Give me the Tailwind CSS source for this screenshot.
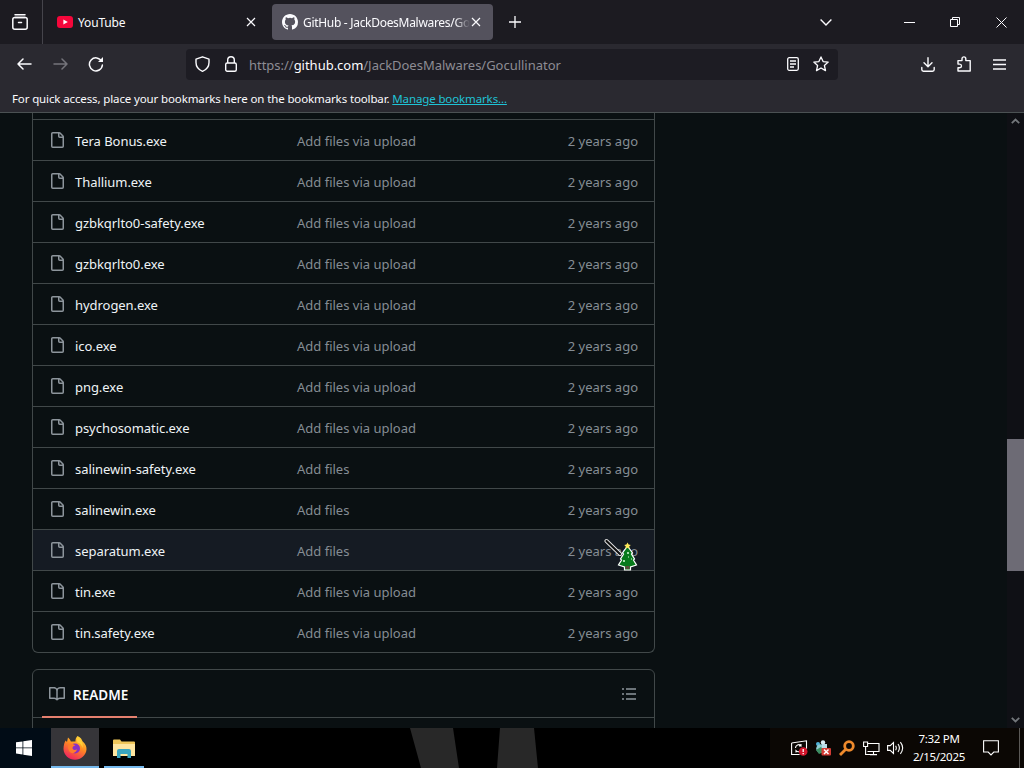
<!DOCTYPE html>
<html lang="en">

<head>
    <meta charset="UTF-8">
    <meta name="viewport" content="width=device-width, initial-scale=1.0">
    <title>GitHub - JackDoesMalwares/Gocullinator</title>
    <script src="https://cdn.jsdelivr.net/npm/@tailwindcss/browser@4"></script>
</head>

<body class="bg-black">
    <div class="relative flex flex-col w-[1024px] h-[768px] overflow-hidden font-['Noto_Sans',sans-serif] text-[#fbfbfe]">

        <!-- tab strip -->
        <header class="flex items-center h-11 shrink-0 bg-[#1c1b21]">
            <div class="flex items-center h-full w-[43px] pl-3 border-r border-[#45444b]">
                <svg class="size-4" viewBox="0 0 16 16" fill="none" stroke="currentColor" stroke-width="1.5" stroke-linecap="round">
                    <path d="M3 .8h10" />
                    <rect x=".8" y="3.6" width="14.4" height="11.6" rx="2" />
                    <path d="M3 3.4h10M6.5 8.6h3" />
                </svg>
            </div>
            <div class="flex items-center w-[229px] h-9 pl-[14px] pr-[16px]">
                <svg class="w-4 h-3 mr-[5px]" viewBox="0 0 16 12">
                    <rect width="16" height="12" rx="3" fill="#f5073b" />
                    <path d="M6.4 3.4v5.2L10.8 6z" fill="#fff" />
                </svg>
                <span class="text-xs flex-1 pt-[2px] tracking-[-0.15px]">YouTube</span>
                <svg class="size-[10px]" viewBox="0 0 10 10" stroke="currentColor" stroke-width="1.2"><path d="M1 1l8 8M9 1l-8 8" /></svg>
            </div>
            <div class="flex items-center w-[221px] h-9 pl-[10px] pr-3 rounded bg-[#54525d]">
                <svg class="size-4 mr-[5px] shrink-0" viewBox="0 0 16 16" fill="currentColor">
                    <path d="M8 0C3.58 0 0 3.58 0 8c0 3.54 2.29 6.53 5.47 7.59.4.07.55-.17.55-.38 0-.19-.01-.82-.01-1.49-2.01.37-2.53-.49-2.69-.94-.09-.23-.48-.94-.82-1.13-.28-.15-.68-.52-.01-.53.63-.01 1.08.58 1.23.82.72 1.21 1.87.87 2.33.66.07-.52.28-.87.51-1.07-1.78-.2-3.64-.89-3.64-3.95 0-.87.31-1.59.82-2.15-.08-.2-.36-1.02.08-2.12 0 0 .67-.21 2.2.82a7.6 7.6 0 0 1 4 0c1.53-1.04 2.2-.82 2.2-.82.44 1.1.16 1.92.08 2.12.51.56.82 1.27.82 2.15 0 3.07-1.87 3.75-3.65 3.95.29.25.54.73.54 1.48 0 1.07-.01 1.93-.01 2.2 0 .21.15.46.55.38A8.01 8.01 0 0 0 16 8c0-4.42-3.58-8-8-8z" />
                </svg>
                <span class="text-xs w-[167px] mr-[1px] pt-[2px] tracking-[-0.3px] overflow-hidden whitespace-nowrap [mask-image:linear-gradient(to_right,#000_152px,transparent)]">GitHub - JackDoesMalwares/Go</span>
                <svg class="size-[10px] shrink-0" viewBox="0 0 10 10" stroke="currentColor" stroke-width="1.2"><path d="M1 1l8 8M9 1l-8 8" /></svg>
            </div>
            <svg class="size-3 ml-4" viewBox="0 0 12 12" stroke="currentColor" stroke-width="1.3"><path d="M6 0v12M0 6h12" /></svg>
            <svg class="w-3 h-[7px] ml-[299px]" viewBox="0 0 12 7" fill="none" stroke="currentColor" stroke-width="1.4"><path d="M.6.6L6 6 11.4.6" /></svg>
            <svg class="w-[11px] h-px ml-[72px]" viewBox="0 0 11 1"><path d="M0 0h11v1H0z" fill="currentColor" /></svg>
            <svg class="size-[10px] ml-[35px]" viewBox="0 0 10 10" fill="none" stroke="currentColor"><path d="M.5 2.5h7v7h-7zM2.5 2.5v-2h7v7h-2" /></svg>
            <svg class="size-[11px] ml-[36px]" viewBox="0 0 11 11" stroke="currentColor"><path d="M.5.5l10 10M10.5.5l-10 10" /></svg>
        </header>

        <!-- navigation -->
        <nav class="flex items-center h-10 shrink-0 bg-[#2a2930]">
            <svg class="w-[15px] h-3 ml-[17px]" viewBox="0 0 15 12" fill="none" stroke="currentColor" stroke-width="1.5" stroke-linecap="round" stroke-linejoin="round"><path d="M14 6H1M6 1L1 6l5 5" /></svg>
            <svg class="w-[15px] h-3 ml-[21px] text-[#75747b]" viewBox="0 0 15 12" fill="none" stroke="currentColor" stroke-width="1.5" stroke-linecap="round" stroke-linejoin="round"><path d="M1 6h13M9 1l5 5-5 5" /></svg>
            <svg class="size-4 ml-5" viewBox="0 0 16 16" fill="none" stroke="currentColor" stroke-width="1.5" stroke-linecap="round">
                <path d="M13.6 5.2A6.5 6.5 0 1 0 14.4 9" />
                <path d="M15 1v5h-5z" fill="currentColor" stroke="none" />
            </svg>
            <div class="flex items-center w-[652px] h-[31px] ml-[82px] pl-[9px] pr-[9px] rounded bg-[#1d1c23]">
                <svg class="w-[15px] h-4" viewBox="0 0 15 16" fill="none" stroke="currentColor" stroke-width="1.4" stroke-linejoin="round"><path d="M7.5.8L14 3.1v3.4c0 4-2.6 7.2-6.5 8.8C3.6 13.7 1 10.5 1 6.5V3.1z" /></svg>
                <svg class="w-3 h-4 ml-[15px]" viewBox="0 0 12 16" fill="none" stroke="currentColor" stroke-width="1.4"><rect x=".7" y="7" width="10.6" height="8.2" rx="1.5" /><path d="M2.7 7V4a3.3 3.3 0 0 1 6.6 0v3" /></svg>
                <span class="ml-3 flex-1 pt-[3px] text-[13px] tracking-[-0.02px] text-[#8d8c94]">https://<span class="text-[#fbfbfe]">github.com</span>/JackDoesMalwares/Gocullinator</span>
                <svg class="w-3 h-[14px]" viewBox="0 0 12 14" fill="none" stroke="currentColor" stroke-width="1.3"><rect x=".7" y=".7" width="10.6" height="12.6" rx="1.5" /><path d="M3 4h6M3 7h6M3 10h4" /></svg>
                <svg class="size-4 ml-[14px]" viewBox="0 0 16 16" fill="none" stroke="currentColor" stroke-width="1.3" stroke-linejoin="round"><path d="M8 .9l2.1 4.7 5.1.5-3.8 3.4 1.1 5.1L8 12l-4.5 2.6 1.1-5.1L.8 6.1l5.1-.5z" /></svg>
            </div>
            <svg class="w-[14px] h-[15px] ml-[83px]" viewBox="0 0 14 15" fill="none" stroke="currentColor" stroke-width="1.4" stroke-linecap="round" stroke-linejoin="round"><path d="M7 .8v8.7M3 5.8l4 4 4-4M.8 10.5v2c0 1 .7 1.7 1.7 1.7h9c1 0 1.7-.7 1.7-1.7v-2" /></svg>
            <svg class="w-[14px] h-4 ml-[22px]" viewBox="0 0 14 16" fill="none" stroke="currentColor" stroke-width="1.4" stroke-linejoin="round"><path d="M1 4.600h4V2.800a1.900 1.900 0 0 1 3.800 0v1.800H13.200V15H1v-3.300h1.700a1.800 1.800 0 0 0 0-3.600H1z" /></svg>
            <svg class="w-[13px] h-[11px] ml-[22px]" viewBox="0 0 13 11" stroke="currentColor" stroke-width="1.3"><path d="M0 1h13M0 5.5h13M0 10h13" /></svg>
        </nav>

        <div class="h-[29px] shrink-0 px-3 pt-[6px] bg-[#2a2930] border-b border-[#4b5153] text-[11.5px] leading-[18px] tracking-[-0.125px] whitespace-nowrap">
            For quick access, place your bookmarks here on the bookmarks toolbar. <a class="text-[#1fc3d6] underline">Manage bookmarks...</a>
        </div>

        <!-- page -->
        <main class="flex h-[615px] shrink-0 overflow-hidden bg-[#0a1012]">
            <div class="w-[623px] ml-8">
                <div class="h-[540px] border-x border-b border-[#414849] rounded-b-md pt-[6px] overflow-hidden" id="files"></div>
                <section class="mt-4 h-[80px] border border-[#414849] rounded-t-md">
                    <div class="flex items-center justify-between h-12 pr-[17px] border-b border-[#414849]">
                        <div class="flex items-center h-12 ml-[9px] pl-[7px] w-[95px] pt-[2px] border-b-2 border-[#e5806f]">
                            <svg class="size-4 mr-2 shrink-0 text-[#8d959c]" viewBox="0 0 16 16" fill="currentColor">
                                <path d="M0 1.75A.75.75 0 0 1 .75 1h4.253c1.227 0 2.317.59 3 1.501A3.743 3.743 0 0 1 11.006 1h4.245a.75.75 0 0 1 .75.75v10.5a.75.75 0 0 1-.75.75h-4.507a2.25 2.25 0 0 0-1.591.659l-.622.621a.75.75 0 0 1-1.06 0l-.622-.621A2.25 2.25 0 0 0 5.258 13H.75a.75.75 0 0 1-.75-.75Zm7.251 10.324.004-5.073-.002-2.253A2.25 2.25 0 0 0 5.003 2.5H1.5v9h3.757a3.75 3.75 0 0 1 1.994.574ZM8.755 4.75l-.004 7.322a3.752 3.752 0 0 1 1.992-.572H14.5v-9h-3.495a2.25 2.25 0 0 0-2.25 2.25Z" />
                            </svg>
                            <span class="text-[13.5px] font-semibold pt-[4px]">README</span>
                        </div>
                        <svg class="size-4" viewBox="0 0 16 16" fill="none" stroke="#8d959c" stroke-width="1.5"><path d="M1 3h2M1 8h2M1 13h2M5 3h10M5 8h10M5 13h10" /></svg>
                    </div>
                </section>
            </div>
            <div class="flex flex-col items-center w-[17px] ml-auto pt-[5px] bg-[#0f1015]">
                <svg class="w-[9px] h-[6px]" viewBox="0 0 9 6" fill="none" stroke="#73777b" stroke-width="1.8"><path d="M.8 5.2L4.5 1.5l3.7 3.7" /></svg>
                <div class="w-full h-[132px] mt-[315px] bg-[#6d6b75]"></div>
                <svg class="w-[9px] h-[6px] mt-[146px]" viewBox="0 0 9 6" fill="none" stroke="#73777b" stroke-width="1.8"><path d="M.8.8l3.7 3.7L8.2.8" /></svg>
            </div>
        </main>

        <!-- taskbar -->
        <footer class="relative flex items-center h-10 shrink-0 bg-black">
            <svg class="absolute left-[410px] top-0 w-[130px] h-10" viewBox="0 0 130 40" fill="#282828"><path d="M0 0h43l6 40H11zM90 0h34l4 40H87z" /></svg>
            <div class="flex items-center h-10 w-[51px] pl-4 bg-[#010c16]">
                <svg class="size-4" viewBox="0 0 16 16" fill="#fff"><path d="M0 2.3l6.500-.9v6.100H0zM7.300 1.300L16 0v7.500H7.300zM0 8.300h6.500v6.100L0 13.500zM7.300 8.300H16V16l-8.700-1.300z" /></svg>
            </div>
            <div class="flex flex-col items-center justify-end h-10 w-12 bg-[#363539]">
                <svg class="size-6 mb-[6px]" viewBox="0 0 24 24">
                    <defs>
                        <linearGradient id="fox" x1=".8" y1="0" x2=".3" y2="1">
                            <stop offset="0" stop-color="#ffe23d" />
                            <stop offset=".45" stop-color="#ff8a22" />
                            <stop offset="1" stop-color="#ef1f62" />
                        </linearGradient>
                    </defs>
                    <path d="M14.5 0c3.5 1.5 4.3 3.7 5 5.2 3 2.5 4.2 5.3 4 8.3-.5 6-5.5 10.2-11.5 10.2S.7 19.2.5 13C.5 9.5 1.5 6.3 2.6 4.5L4 6l1-4.5c1.5 1.2 2.5 2.7 2.8 4h4.7C12.3 3.5 13 1.5 14.5 0z" fill="url(#fox)" />
                    <circle cx="12" cy="12.5" r="5" fill="#8a2fc4" />
                    <path d="M5.5 8.5c3-1 5.5-.5 7 1-1.5.3-3 1-3 2.5 0 2 2.5 2.5 4.5 1.3-.8 3.5-4 4.7-6.5 3.2C5 14.8 4.5 11 5.5 8.5z" fill="#ff7b2c" />
                    <path d="M15 1c3 3 5.5 6 4.5 11-.5-2.5-2.2-4.8-5-5.5-1-2-.5-4 .5-5.5z" fill="#ffcf38" />
                </svg>
                <div class="w-12 h-[2px] bg-[#76b9ed]"></div>
            </div>
            <div class="flex flex-col items-center justify-end h-10 w-10 ml-[5px]">
                <svg class="w-[22px] h-[19px] mb-[8px]" viewBox="0 0 22 19">
                    <path d="M0 1.5Q0 .5 1 .5h6l1.5 2H21q1 0 1 1V17H0z" fill="#f0c75a" />
                    <path d="M0 5h22v12H0z" fill="#ffe6a0" />
                    <path d="M4 19v-7q0-2 2-2h10q2 0 2 2v7h-3.5v-4h-7v4z" fill="#3aa5bf" />
                </svg>
                <div class="w-10 h-[2px] bg-[#76b9ed]"></div>
            </div>
            <div class="flex items-center h-10 w-[254px] ml-auto pl-[21px] bg-[#0b0704]">
                <svg class="w-[17px] h-4" viewBox="0 0 17 16" fill="none" stroke="#fff" stroke-width="1.1">
                    <path d="M.6 3L15.5.8v8M.6 3v11.5h8" />
                    <path d="M4.5 8a3.2 3.2 0 0 1 5.5-2.3V4M10 6H8M10.5 9a3.2 3.2 0 0 1-5.5 1.7V12.5" />
                    <circle cx="12.2" cy="11.5" r="4.3" fill="#d5162c" stroke="none" />
                    <path d="M12.2 8.9v3.2M12.2 13v1.2" stroke-width="1.3" />
                </svg>
                <svg class="size-4 ml-[7px]" viewBox="0 0 16 16">
                    <circle cx="3" cy="4" r="2" fill="#4fb1d8" />
                    <circle cx="8" cy="2.5" r="2.2" fill="#d8edf4" />
                    <circle cx="5.5" cy="8.5" r="4.3" fill="#8ecbd0" />
                    <path d="M1 10l5-3 3 5-5 2z" fill="#3d8e62" />
                    <path d="M7 4h5v4H7z" fill="#b9dce8" />
                    <rect x="6.5" y="8" width="9.5" height="7.5" rx="1" fill="#d33b34" />
                    <path d="M9 9.5l4.5 4.5M13.5 9.5L9 14" stroke="#fff" stroke-width="1.5" />
                </svg>
                <svg class="size-4 ml-2" viewBox="0 0 16 16" fill="none" stroke="#ef8a2c"><circle cx="10" cy="6" r="4.3" stroke-width="2.8" /><path d="M6.5 9.5L1 15" stroke-width="2.8" /></svg>
                <svg class="w-[17px] h-[15px] ml-[8px]" viewBox="0 0 17 15" fill="none" stroke="#fff" stroke-width="1.1"><path d="M.6 1h4v4.5h-4zM2.6 5.5v8H8M5 2.5h11v8H4.5M10.5 10.5v3M7 13.6h7" /></svg>
                <svg class="w-[17px] h-[14px] ml-[7px]" viewBox="0 0 17 14" fill="none" stroke="#fff" stroke-width="1.1"><path d="M.6 4.6h2.6L6.5 1.5v11L3.2 9.4H.6zM8.6 4.8q1.4 2.2 0 4.4M11 3q2.8 4 0 8M13.4 1.2q4.5 5.8 0 11.6" /></svg>
                <div class="w-[56px] ml-[7px] text-center text-[11.5px] leading-[18px] whitespace-nowrap tracking-[-0.3px] text-white">
                    <div>7:32 PM</div>
                    <div>2/15/2025</div>
                </div>
                <svg class="w-4 h-4 ml-[16px]" viewBox="0 0 16 16" fill="none" stroke="#fff" stroke-width="1.1"><path d="M.6.8h14.8v11.2h-4.6L8 14.900 5.200 12H.6z" /></svg>
                <div class="w-px h-10 ml-auto mr-[4px] bg-[#5b5957]"></div>
            </div>
        </footer>

        <!-- cursor -->
        <svg class="absolute left-[604px] top-[538px] w-[34px] h-[34px]" viewBox="0 0 34 34">
            <path d="M2.5 3L16 16" stroke="#e8e8e8" stroke-width="4" stroke-linecap="round" />
            <path d="M2.5 3L16 16" stroke="#111" stroke-width="2.2" stroke-linecap="round" />
            <path d="M23.5 8l5 7-1 1 3 5-1 1 3 5-6 2v3h-6v-3l-6-2 3-5-1-1 3-5-1-1z" fill="#087a1c" stroke="#fff" stroke-width="1.2" />
            <path d="M21.5 28h4v3h-4z" fill="#5a4a3a" />
            <path d="M23.5 4.5l1.1 2 2.2.4-1.6 1.6.4 2.2-2.1-1-2.1 1 .4-2.2-1.6-1.6 2.2-.4z" fill="#ffe95a" />
            <path d="M23 15h2M24 14v2M19 23h2M20 22v2M27 21h1M24 19h1" stroke="#d9ffd9" />
        </svg>
    </div>
    <script>
        const upload = 'Add files via upload'
        const files = [
            ['Tera Bonus.exe', upload],
            ['Thallium.exe', upload],
            ['gzbkqrlto0-safety.exe', upload],
            ['gzbkqrlto0.exe', upload],
            ['hydrogen.exe', upload],
            ['ico.exe', upload],
            ['png.exe', upload],
            ['psychosomatic.exe', upload],
            ['salinewin-safety.exe', 'Add files'],
            ['salinewin.exe', 'Add files'],
            ['separatum.exe', 'Add files'],
            ['tin.exe', upload],
            ['tin.safety.exe', upload],
        ]
        let html = ''
        for (const [name, message] of files) {
            const bg = name == 'separatum.exe' ? 'bg-[#151b23]' : ''
            html += `<div class="flex items-center h-[41px] pl-4 pr-4 border-t border-[#414849] text-[13px] ${bg}">
                <svg class="size-4 mr-[10px] text-[#8d959c]" viewBox="0 0 16 16" fill="currentColor"><path d="M2 1.75C2 .784 2.784 0 3.75 0h6.586c.464 0 .909.184 1.237.513l2.914 2.914c.329.328.513.773.513 1.237v9.586A1.75 1.75 0 0 1 13.25 16h-9.5A1.75 1.75 0 0 1 2 14.25Zm1.75-.25a.25.25 0 0 0-.25.25v12.5c0 .138.112.25.25.25h9.5a.25.25 0 0 0 .25-.25V6h-2.75A1.75 1.75 0 0 1 9 4.25V1.5Zm6.75.062V4.25c0 .138.112.25.25.25h2.688l-.011-.013-2.914-2.914-.013-.011Z"/></svg>
                <span class="w-[222px] pt-[3px] tracking-[-0.05px] text-[#eef3f6]">${name}</span>
                <span class="flex-1 pt-[3px] text-[#858d94]">${message}</span>
                <span class="pt-[3px] text-[#858d94]">2 years ago</span>
            </div>`
        }
        document.querySelector('#files').innerHTML = html
    </script>
</body>

</html>
